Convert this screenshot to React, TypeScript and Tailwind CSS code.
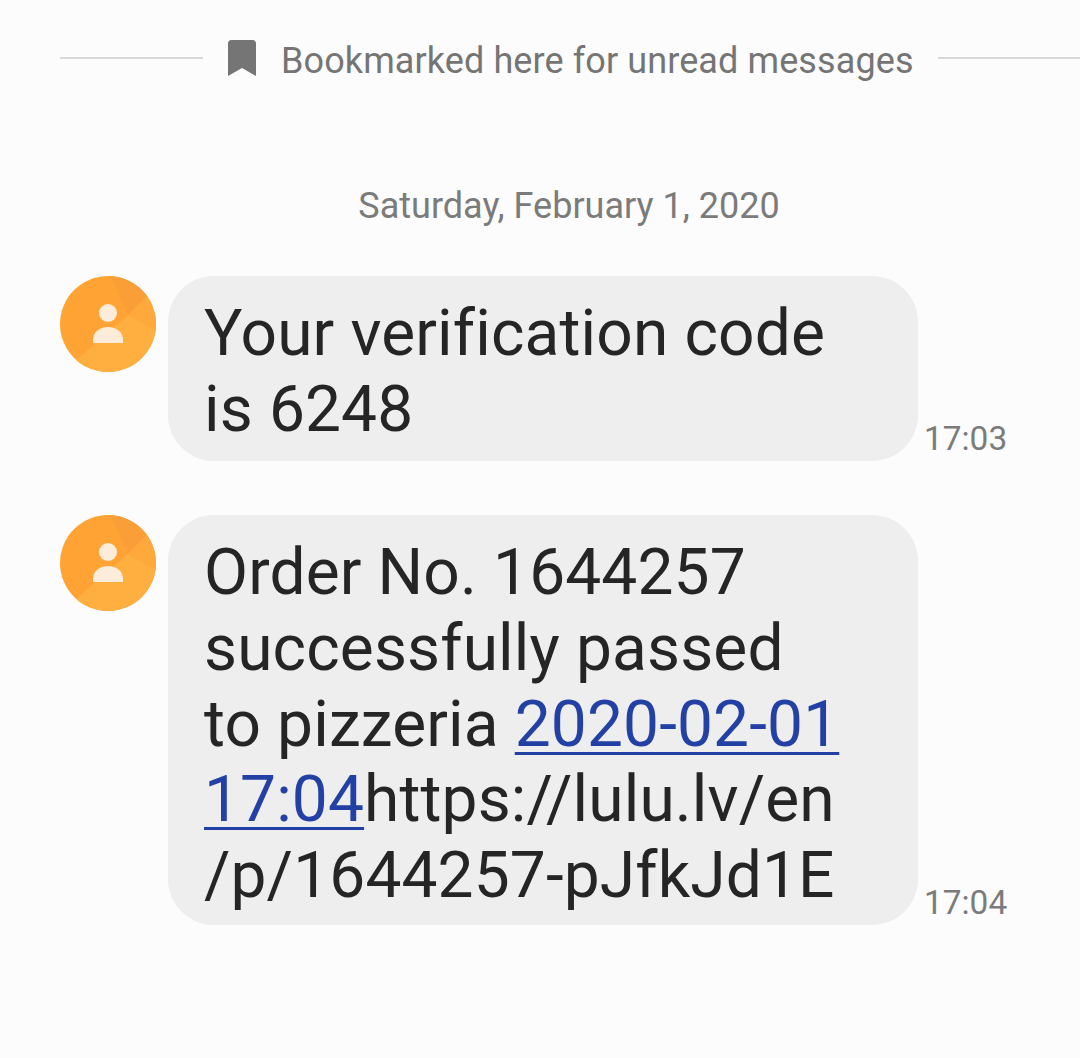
const Avatar = ({ id }: { id: string }) => (
  <svg viewBox="0 0 96 96" className="w-24 h-24 shrink-0">
    <defs>
      <clipPath id={id}>
        <circle cx="48" cy="48" r="48" />
      </clipPath>
    </defs>
    <g clipPath={`url(#${id})`}>
      <rect width="96" height="96" fill="#ffa434" />
      <path d="M50 0L68 39L96 11V0Z" fill="#fa9e38" />
      <path d="M68 39L96 11V55Z" fill="#ffa83b" />
      <path d="M-10 107L68 39L96 55V110Z" fill="#ffae40" />
    </g>
    <circle cx="48" cy="37" r="9" fill="#fcecd9" />
    <path d="M33 67V64C33 56 40 51 48 51C56 51 63 56 63 64V67Z" fill="#fcecd9" />
  </svg>
)

const Message = ({ id, time, className, children }: { id: string; time: string; className?: string; children: React.ReactNode }) => (
  <div className="flex items-start pl-[60px]">
    <Avatar id={id} />
    <div className={`ml-3 w-[750px] rounded-[46px] bg-[#eeeeee] pl-[36px] pt-[20px] text-[64px] leading-[75.8px] tracking-[0.14px] text-[#252525] ${className ?? ''}`}>
      {children}
    </div>
    <span className="ml-[6px] self-end pb-[3px] text-[33.4px] leading-[38px] text-[#7b7b7b]">{time}</span>
  </div>
)

export default function App() {
  return (
    <div className="h-[1058px] w-[1080px] overflow-hidden bg-[#fcfcfc] font-['Roboto',sans-serif]">
      <div className="flex items-center pl-[60px] pt-10 h-[76px]">
        <div className="h-0.5 w-[143px] bg-[#d9d9d9]" />
        <svg viewBox="0 0 28 36" className="ml-[25px] h-9 w-7 shrink-0">
          <path d="M3 0H25C26.5 0 28 1.5 28 3V36L14 28L0 36V3C0 1.5 1.5 0 3 0Z" fill="#757575" />
        </svg>
        <span className="ml-[25px] mt-[6px] whitespace-nowrap text-[36px] leading-[42px] tracking-[0.1px] text-[#757575]">Bookmarked here for unread messages</span>
        <div className="ml-[24px] h-0.5 grow bg-[#d9d9d9]" />
      </div>
      <div className="mt-[110px] text-center pl-[58px] text-[36px] leading-10 text-[#7b7b7b]">Saturday, February 1, 2020</div>
      <div className="mt-[50px] flex flex-col gap-[54px]">
        <Message id="a1" time="17:03" className="h-[185px]">
          Your verification code
          <br />
          is 6248
        </Message>
        <Message id="a2" time="17:04" className="h-[410px]">
          Order No. 1644257
          <br />
          successfully passed
          <br />
          to pizzeria <span className="text-[#2340a5] underline decoration-[length:3px] underline-offset-[6px]">2020-02-01</span>
          <br />
          <span className="text-[#2340a5] underline decoration-[length:3px] underline-offset-[6px]">17:04</span>https://lulu.lv/en
          <br />
          /p/1644257-pJfkJd1E
        </Message>
      </div>
    </div>
  )
}
